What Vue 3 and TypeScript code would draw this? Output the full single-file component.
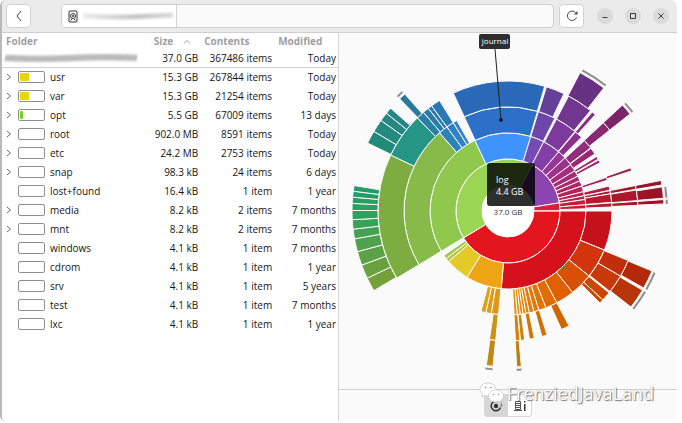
<script setup lang="ts">
interface Folder {
  name: string
  size: string
  contents: string
  modified: string
  expandable: boolean
  share: number
  color: string
}

type Slice = [ring: number, from: number, to: number, color: string]

const row = (
  name: string, size: string, contents: string, modified: string,
  expandable = false, share = 0, color = 'transparent',
): Folder => ({ name, size, contents, modified, expandable, share, color })

const folders: Folder[] = [
  row('usr', '15.3 GB', '267844 items', 'Today', true, 41, '#edd400'),
  row('var', '15.3 GB', '21254 items', 'Today', true, 41, '#edd400'),
  row('opt', '5.5 GB', '67009 items', '13 days', true, 15, '#73d216'),
  row('root', '902.0 MB', '8591 items', 'Today', true),
  row('etc', '24.2 MB', '2753 items', 'Today', true),
  row('snap', '98.3 kB', '24 items', '6 days', true),
  row('lost+found', '16.4 kB', '1 item', '1 year'),
  row('media', '8.2 kB', '2 items', '7 months', true),
  row('mnt', '8.2 kB', '2 items', '7 months', true),
  row('windows', '4.1 kB', '1 item', '7 months'),
  row('cdrom', '4.1 kB', '1 item', '1 year'),
  row('srv', '4.1 kB', '1 item', '5 years'),
  row('test', '4.1 kB', '1 item', '7 months'),
  row('lxc', '4.1 kB', '1 item', '1 year'),
]

const RING = 26

// Angles are degrees clockwise from the positive x axis.
const slices: Slice[] = [
  [1, 0, 148.9, '#e3151f'],
  [1, 148.9, 298, '#9ad654'],
  [1, 298, 351, '#8d44b2'],
  [1, 351, 359.6, '#d61f3c'],

  [2, 0, 95, '#d5121b'],
  [2, 95, 121.7, '#eda515'],
  [2, 121.7, 139.7, '#e4c928'],
  [2, 139.7, 142.4, '#b3c83d'],
  [2, 142.4, 145.3, '#a5c847'],
  [2, 148.9, 244.9, '#90c84e'],
  [2, 244.9, 287, '#3e93fd'],
  [2, 287, 297.3, '#764cb2'],
  [2, 297.3, 310.6, '#843ea8'],
  [2, 310.6, 317, '#95389a'],
  [2, 317, 323.5, '#9d3389'],
  [2, 323.5, 329, '#a22f7e'],
  [2, 329, 333.5, '#a72c75'],
  [2, 333.5, 337.3, '#aa2a6c'],
  [2, 337.3, 341.3, '#ae2763'],
  [2, 341.3, 345.6, '#b4245a'],
  [2, 345.6, 348.7, '#ba2250'],
  [2, 348.7, 351.5, '#bf2049'],
  [2, 351.5, 355.4, '#c71d37'],
  [2, 355.4, 358.4, '#c91a31'],

  [3, 0, 22.1, '#c51119'],
  [3, 22.1, 38.7, '#d2340e'],
  [3, 38.7, 51.6, '#da4e05'],
  [3, 51.6, 62, '#df6000'],
  [3, 62, 68.6, '#e06c02'],
  [3, 68.6, 72.7, '#e17404'],
  [3, 72.7, 75.6, '#e17a05'],
  [3, 75.6, 78.2, '#e17f06'],
  [3, 78.2, 80.1, '#e18407'],
  [3, 80.1, 81.7, '#e18808'],
  [3, 81.7, 83.3, '#e18b09'],
  [3, 83.3, 84.9, '#e18e0b'],
  [3, 84.9, 86.6, '#e1910d'],
  [3, 95.2, 99.3, '#dc9a14'],
  [3, 99.3, 102.3, '#dc9e17'],
  [3, 102.3, 105.1, '#dca21a'],
  [3, 148.9, 228.8, '#87ba48'],
  [3, 228.8, 234, '#2e82bb'],
  [3, 234, 238.2, '#3081c4'],
  [3, 238.2, 240.5, '#3382cb'],
  [3, 245.1, 286.5, '#2c70c8'],
  [3, 287, 296.8, '#6c46a8'],
  [3, 297.8, 310.1, '#7b3a9c'],
  [3, 310.5, 314.9, '#8b318b'],
  [3, 317.3, 322.6, '#922d7e'],
  [3, 322.9, 326.7, '#972a72'],
  [3, 328.4, 330.1, '#9e2769'],
  [3, 330.6, 332.3, '#a12564'],
  [3, 341.1, 342.8, '#a82150'],
  [3, 346.1, 348.5, '#ae1e42'],
  [3, 348.7, 350.5, '#b11c3c'],
  [3, 350.5, 355.2, '#b9182f'],
  [3, 355.5, 357.8, '#bb172b'],

  [4, 22.4, 30.1, '#c22e0b'],
  [4, 30.1, 38.3, '#c73908'],
  [4, 39, 43.2, '#cb4503'],
  [4, 43.2, 45, '#cc4b00'],
  [4, 62, 65.7, '#d06501'],
  [4, 72.5, 74.9, '#cf7004'],
  [4, 78.3, 80.5, '#cf7905'],
  [4, 82.6, 84.5, '#cf8209'],
  [4, 84.7, 86.7, '#cf850b'],
  [4, 95.4, 98.2, '#cc9213'],
  [4, 148.9, 205.5, '#7dac41'],
  [4, 205.5, 225.8, '#259586'],
  [4, 225.8, 229.4, '#287fa6'],
  [4, 229.4, 232.2, '#2a7cab'],
  [4, 232.2, 234, '#2b7ab0'],
  [4, 234, 238.2, '#2b78b5'],
  [4, 245.1, 286.4, '#2a69b8'],
  [4, 287.2, 295.5, '#634199'],
  [4, 297.8, 309.4, '#723690'],
  [4, 310.4, 312.2, '#822f85'],
  [4, 317.2, 321.5, '#872a73'],
  [4, 340.6, 342, '#a01f46'],
  [4, 348.7, 350.4, '#a41a2d'],
  [4, 350.7, 355.4, '#ab162a'],
  [4, 355.7, 357.5, '#ac1527'],

  [5, 22.6, 29.6, '#b4290a'],
  [5, 30.5, 38, '#b83507'],
  [5, 85.1, 86.8, '#c07d0b'],
  [5, 95.5, 98, '#c08913'],
  [5, 149.3, 154.5, '#74a03c'],
  [5, 154.5, 159.7, '#68a23f'],
  [5, 159.7, 164.9, '#5aa245'],
  [5, 164.9, 169.7, '#4fa24b'],
  [5, 169.7, 173.3, '#44a251'],
  [5, 173.3, 176.8, '#3aa257'],
  [5, 176.8, 180.2, '#2ea25b'],
  [5, 180.2, 182.8, '#28a25e'],
  [5, 182.8, 185.1, '#279f62'],
  [5, 185.1, 187.3, '#269d66'],
  [5, 187.3, 189.4, '#259b69'],
  [5, 205.8, 210.7, '#238a79'],
  [5, 210.7, 215.5, '#24897f'],
  [5, 215.5, 218.8, '#248784'],
  [5, 218.8, 221.2, '#258588'],
  [5, 226, 228.6, '#267a9c'],
  [5, 297.5, 307.9, '#693184'],
  [5, 317.2, 321.5, '#7b2466'],
  [5, 348.7, 350.4, '#96162d'],
  [5, 351.1, 355.3, '#9c1325'],
  [5, 355.8, 357.4, '#9d1223'],
]

// Slices whose children lie beyond the deepest drawn ring.
const continued: [number, number][] = [
  [22.8, 29.6], [30.5, 38], [85.1, 86.9], [95.6, 98.2], [226, 228.4],
  [297.9, 307.9], [317.4, 321.5], [351.4, 355.2], [355.9, 357.5],
]

function point(radius: number, degrees: number): string {
  const a = (degrees * Math.PI) / 180
  return `${(radius * Math.cos(a)).toFixed(2)} ${(radius * Math.sin(a)).toFixed(2)}`
}

function slicePath([ring, from, to]: Slice): string {
  const inner = ring * RING
  const outer = inner + RING
  const large = to - from > 180 ? 1 : 0
  return `M${point(inner, from)}L${point(outer, from)}A${outer} ${outer} 0 ${large} 1 ${point(outer, to)}`
    + `L${point(inner, to)}A${inner} ${inner} 0 ${large} 0 ${point(inner, from)}Z`
}

function continuedPath([from, to]: [number, number]): string {
  return `M${point(159, from)}A159 159 0 0 1 ${point(159, to)}`
}

function smudge(count: number, step: number, height: number): string {
  return Array.from({ length: count }, (_, i) => {
    const y = 10 + Math.sin(i / 7)
    return `M${4 + i * step} ${y + height / 2}l1 ${-height}`
  }).join('')
}
</script>

<template>
  <div class="desktop">
    <main class="window">
      <header class="titlebar">
        <button class="square back" aria-label="Back">
          <svg width="8" height="14" viewBox="0 0 8 14"><path d="M6 2 2 7l4 5" /></svg>
        </button>
        <nav class="location">
          <button class="crumb" aria-label="Disk">
            <svg class="disk" width="10" height="13" viewBox="0 0 10 13">
              <rect x="1" y="1" width="8" height="11" rx="1" />
              <circle cx="5" cy="6" r="2.5" />
              <circle cx="5" cy="6" r=".7" />
              <path d="M2.5 10.5 4 9M6 9l1.5 1.5" />
            </svg>
            <svg class="smudge" width="96" height="20" viewBox="0 0 96 20">
              <defs>
                <linearGradient id="fade-in" x1="0" x2="96" y1="0" y2="0" gradientUnits="userSpaceOnUse">
                  <stop offset="0" stop-color="#e6e6e6" />
                  <stop offset=".6" stop-color="#aaa" />
                  <stop offset="1" stop-color="#ccc" />
                </linearGradient>
              </defs>
              <path :d="smudge(30, 3, 5)" stroke="url(#fade-in)" />
            </svg>
          </button>
        </nav>
        <button class="square reload" aria-label="Rescan">
          <svg width="14" height="14" viewBox="0 0 14 14">
            <path d="M10.5 3.5A4.700 4.700 0 1 0 11.5 8.5" />
            <path class="solid" d="M12.5 2v3.500H9z" />
          </svg>
        </button>
        <div class="controls">
          <button aria-label="Minimize"><svg width="8" height="8" viewBox="0 0 8 8"><path d="M1.5 5.5h5" /></svg></button>
          <button aria-label="Maximize"><svg width="8" height="8" viewBox="0 0 8 8"><path d="M1.5 1.5h5v5h-5z" /></svg></button>
          <button aria-label="Close"><svg width="8" height="8" viewBox="0 0 8 8"><path d="m1.5 1.5 5 5m0-5-5 5" /></svg></button>
        </div>
      </header>

      <div class="content">
        <section class="list">
          <table>
            <colgroup>
              <col class="c-folder"><col class="c-size"><col class="c-contents"><col class="c-modified">
            </colgroup>
            <thead>
              <tr>
                <th scope="col">Folder</th>
                <th scope="col">
                  <button class="sort">
                    Size
                    <svg width="8" height="5" viewBox="0 0 8 5"><path d="M1 4.500 4 1.500l3 3" /></svg>
                  </button>
                </th>
                <th scope="col">Contents</th>
                <th scope="col">Modified</th>
              </tr>
            </thead>
            <tbody>
              <tr class="total">
                <td>
                  <svg class="smudge" width="136" height="16" viewBox="0 0 136 20" preserveAspectRatio="none">
                    <path :d="smudge(44, 3, 8)" stroke="#999" />
                  </svg>
                </td>
                <td>37.0 GB</td>
                <td>367486 items</td>
                <td>Today</td>
              </tr>
              <tr v-for="f in folders" :key="f.name">
                <td>
                  <div class="name">
                    <button v-if="f.expandable" class="expander" :aria-label="`Expand ${f.name}`">
                      <svg width="6" height="8" viewBox="0 0 6 8"><path d="M1 1l3.500 3L1 7" /></svg>
                    </button>
                    <span v-else class="expander"></span>
                    <span class="bar">
                      <span v-if="f.share" class="fill" :style="{ width: f.share + '%', background: f.color }"></span>
                    </span>
                    <span>{{ f.name }}</span>
                  </div>
                </td>
                <td>{{ f.size }}</td>
                <td>{{ f.contents }}</td>
                <td>{{ f.modified }}</td>
              </tr>
            </tbody>
          </table>
        </section>

        <section class="chart">
          <div class="canvas">
            <svg class="sunburst" width="338" height="356" viewBox="-169 -178 338 356">
              <path
                v-for="(s, i) in slices" :key="i"
                :d="slicePath(s)" :fill="s[3]" class="slice"
              />
              <path v-for="(c, i) in continued" :key="`c${i}`" :d="continuedPath(c)" class="continued" />
              <circle r="26" class="hub" />
              <text x="0" y="4" class="hub-text">37.0 GB</text>
              <path d="M-13-162-7-91" class="leader" />
              <circle cx="-7" cy="-91" r="1.700" />
              <rect x="-29" y="-177" width="31" height="15" rx="2" class="label" />
              <text x="-13" y="-167" class="label-text">journal</text>
              <rect x="-21" y="-48" width="48" height="43" rx="3" class="tip" />
              <text x="-12" y="-28" class="tip-text">log</text>
              <text x="-12" y="-16" class="tip-text">4.4 GB</text>
            </svg>
          </div>
          <footer class="switcher">
            <button class="active" aria-label="Rings chart">
              <svg width="14" height="14" viewBox="0 0 14 14">
                <path d="M9 2.600A4.800 4.800 0 1 0 11.500 8.500" fill="none" stroke="#333" stroke-width="1.500" />
                <path d="M7 1a6 6 0 0 1 6 6h-2" fill="none" stroke="#777" stroke-width="1" />
                <circle cx="7" cy="7" r="2.200" fill="#333" />
              </svg>
            </button>
            <button aria-label="Treemap chart">
              <svg width="14" height="14" viewBox="0 0 14 14">
                <path d="M2.500 2.500h5v8h-5zM3 4.500h4M3 6.500h4M3 8.500h4M1 11.500h8" fill="none" stroke="#555" />
                <path d="M11 2h1.500v1.500H11zM11 5h1.500v7H11z" fill="#333" />
              </svg>
            </button>
          </footer>
        </section>
      </div>

      <div class="watermark">
        <svg width="26" height="22" viewBox="0 0 26 22">
          <path d="M9 1C4 1 1 4 1 7.500c0 2 1 3.800 2.800 5L3 15l3-1.500c5 1.500 11-1 11-6C17 4 14 1 9 1z" />
          <path d="M17 8c-4.500 0-7.500 2.500-7.500 6s3 6 7.500 6l2.500-.4L22 21l-.6-2.200c2-1.200 3.100-2.900 3.100-4.800C24.500 10.500 21.500 8 17 8z" />
          <circle cx="6.500" cy="5.500" r=".8" /><circle cx="12" cy="5.500" r=".8" />
          <circle cx="14.500" cy="12.500" r=".7" /><circle cx="19.500" cy="12.500" r=".7" />
        </svg>
        <span>FrenziedJavaLand</span>
      </div>
    </main>
  </div>
</template>

<style>
body {
  background: #fff;
}
</style>

<style scoped>
.desktop {
  box-sizing: border-box;
  min-height: 100vh;
  display: flex;
  padding: 0 5px 2px 0;
  font: 10px/18px "Open Sans", "Noto Sans", sans-serif;
  color: #151515;
}

.window {
  position: relative;
  flex: 1;
  display: flex;
  flex-direction: column;
  box-sizing: border-box;
  border-left: 2px solid #b9b9b9;
  border-radius: 6px 6px 5px 5px;
  overflow: hidden;
  background: #fafafa;
}

button {
  display: flex;
  align-items: center;
  justify-content: center;
  padding: 0;
  border: 0;
  background: none;
  font: inherit;
  color: inherit;
}

svg {
  display: block;
  flex: none;
}

.titlebar {
  box-sizing: border-box;
  display: flex;
  align-items: center;
  height: 33px;
  padding: 0 8px 0 4px;
  background: #ebebeb;
  border-bottom: 1px solid #cfcfcf;
}

.square {
  box-sizing: border-box;
  width: 25px;
  height: 24px;
  border: 1px solid #d2d2d2;
  border-radius: 4px;
  background: #fff;
}

.square path {
  fill: none;
  stroke: #444;
}

.square .solid {
  fill: #444;
  stroke: none;
}

.location {
  box-sizing: border-box;
  flex: 1;
  display: flex;
  height: 24px;
  margin: 0 5px 0 30px;
  border: 1px solid #cfcfcf;
  border-radius: 4px;
  background: #fafafa;
  overflow: hidden;
}

.crumb {
  justify-content: flex-start;
  padding: 0 0 0 6px;
  gap: 2px;
  border-right: 1px solid #d2d2d2;
  background: #fff;
}

.disk * {
  fill: none;
  stroke: #333;
}

.smudge path {
  fill: none;
  stroke-width: 2;
  filter: blur(1px);
}

.controls {
  display: flex;
  gap: 12px;
  margin-left: 13px;
}

.controls button {
  width: 16px;
  height: 16px;
  border-radius: 50%;
  background: #dadada;
}

.controls path {
  fill: none;
  stroke: #3c3c3c;
}

.content {
  flex: 1;
  display: flex;
}

.list {
  box-sizing: border-box;
  flex: 1;
  background: #fff;
  border-right: 1px solid #d5d5d5;
}

table {
  width: 100%;
  table-layout: fixed;
  border-collapse: separate;
  border-spacing: 0;
}

.c-folder { width: 44%; }
.c-size { width: 15%; }
.c-contents { width: 22%; }
.c-modified { width: 19%; }

th {
  height: 17px;
  padding: 0 0 0 4px;
  line-height: 17px;
  text-align: left;
  font-weight: 700;
  color: #a0a0a0;
}

.sort {
  width: 100%;
  justify-content: flex-start;
  gap: 10px;
  line-height: 17px;
}

.sort path {
  fill: none;
  stroke: #999;
}

td {
  height: 19px;
  padding: 0 2px;
  text-align: right;
  vertical-align: top;
  white-space: nowrap;
}

td:first-child {
  padding: 0 0 0 3px;
  text-align: left;
}

.total td {
  height: 17px;
  line-height: 17px;
  border-bottom: 1px solid #d2d2d2;
}

.total td:first-child {
  padding: 0;
}

.name {
  display: flex;
  align-items: center;
  gap: 5px;
}

.expander {
  width: 8px;
}

.expander path {
  fill: none;
  stroke: #666;
}

.bar {
  box-sizing: border-box;
  width: 27px;
  height: 12px;
  padding: 1px;
  border: 1px solid #8f8f8f;
  border-radius: 2px;
}

.fill {
  display: block;
  height: 100%;
  border-radius: 1px;
}

.chart {
  flex: 1;
  display: flex;
  flex-direction: column;
}

.canvas {
  flex: 1;
  display: flex;
  align-items: center;
  justify-content: center;
}

.sunburst {
  overflow: visible;
}

.slice {
  stroke: #fafafa;
  stroke-width: 1;
}

.continued {
  fill: none;
  stroke: #8b8e8b;
  stroke-width: 2;
}

.hub {
  fill: #fff;
}

.hub-text {
  font-size: 8px;
  text-anchor: middle;
  fill: #333;
}

.leader {
  stroke: #222;
  stroke-width: 1;
}

.label {
  fill: #2e2e2e;
}

.label-text {
  font-size: 8px;
  text-anchor: middle;
  fill: #fff;
}

.tip {
  fill: rgba(0, 0, 0, 0.82);
}

.tip-text {
  font-size: 9px;
  fill: #fff;
}

.switcher {
  box-sizing: border-box;
  display: flex;
  justify-content: center;
  height: 32px;
  padding: 4px 0;
  border-top: 1px solid #d0d0d0;
}

.switcher button {
  width: 24px;
  background: #fff;
  border: 1px solid #d6d6d6;
  border-left: 0;
  border-radius: 0 4px 4px 0;
}

.switcher .active {
  background: #d6d6d6;
  border-radius: 4px 0 0 4px;
}

/* Signature laid over the lower right corner of the window. */
.watermark {
  position: absolute;
  right: 23px;
  bottom: 16px;
  display: flex;
  align-items: center;
  gap: 2px;
  font-size: 18px;
  line-height: 24px;
  color: #fff;
  text-shadow: 1px 1px 1px #777, 0 0 1px #999;
}

.watermark path {
  fill: #fff;
  stroke: #c4c4c4;
  stroke-width: 0.7;
}

.watermark circle {
  fill: #888;
}
</style>
